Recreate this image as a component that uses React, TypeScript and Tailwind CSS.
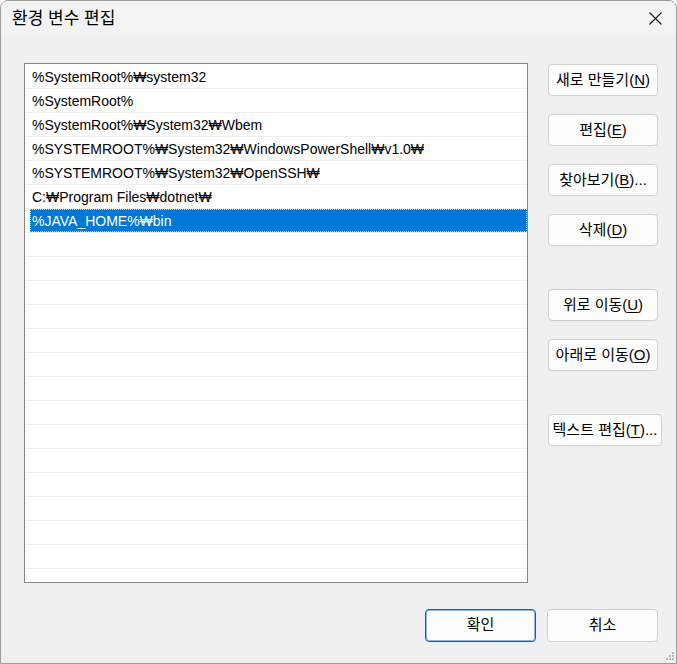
const paths = [
  "%SystemRoot%₩system32",
  "%SystemRoot%",
  "%SystemRoot%₩System32₩Wbem",
  "%SYSTEMROOT%₩System32₩WindowsPowerShell₩v1.0₩",
  "%SYSTEMROOT%₩System32₩OpenSSH₩",
  "C:₩Program Files₩dotnet₩",
  "%JAVA_HOME%₩bin",
];

const SELECTED = 6;
const ROW_COUNT = 22;

const FONT = {
  fontFamily: '"Liberation Sans", "Noto Sans CJK KR", sans-serif',
};

function Btn({
  label,
  hotkey,
  suffix = "",
  className = "",
}: {
  label: string;
  hotkey?: string;
  suffix?: string;
  className?: string;
}) {
  return (
    <button
      className={`h-[32px] shrink-0 flex items-center justify-center rounded-[4px] border border-[#d0d0d0] bg-[#fdfdfd] text-[15px] text-black whitespace-nowrap ${className}`}
    >
      {label}
      {hotkey && (
        <>
          (<span className="underline underline-offset-2">{hotkey}</span>)
        </>
      )}
      {suffix}
    </button>
  );
}

function PathList() {
  const rows = Array.from({ length: ROW_COUNT }, (_, i) => paths[i] ?? "");
  return (
    <div className="w-[504px] h-[520px] shrink-0 border border-[#858585] bg-white overflow-hidden pt-[1px] pl-[1px]">
      {rows.map((text, i) => (
        <div key={i} className="h-[24px] border-b border-[#efefef] pl-[4px]">
          <div
            className={
              i === SELECTED
                ? "h-full pl-[2px] flex items-center bg-[#0078d7] text-white outline outline-1 outline-dotted outline-[#e9c99b] -outline-offset-1"
                : "h-full pl-[2px] flex items-center text-black"
            }
          >
            <span className="text-[14px] leading-none whitespace-nowrap">{text}</span>
          </div>
        </div>
      ))}
    </div>
  );
}

export default function App() {
  return (
    <div
      style={FONT}
      className="relative w-[677px] h-[664px] flex flex-col bg-[#f0f0f0] border border-[#9c9c9c] rounded-t-[8px] overflow-hidden"
    >
      {/* Title bar */}
      <div className="h-[34px] shrink-0 bg-[#f3f3f3] flex items-center justify-between pl-[11px] pr-[14px]">
        <span className="text-[17px] text-black leading-none">환경 변수 편집</span>
        <svg width="13" height="13" viewBox="0 0 13 13" fill="none" stroke="#1a1a1a" strokeWidth="1.1">
          <path d="M0.5 0.5 L12.5 12.5 M12.5 0.5 L0.5 12.5" />
        </svg>
      </div>

      {/* Body */}
      <div className="flex-1 pt-[28px] pl-[23px] pr-[18px]">
        <div className="flex items-start">
          <PathList />
          <div className="ml-[20px] mt-[1px] w-[110px] shrink-0 flex flex-col gap-[18px]">
            <Btn label="새로 만들기" hotkey="N" className="w-[110px]" />
            <Btn label="편집" hotkey="E" className="w-[110px]" />
            <Btn label="찾아보기" hotkey="B" suffix="..." className="w-[110px]" />
            <Btn label="삭제" hotkey="D" className="w-[110px]" />
            <Btn label="위로 이동" hotkey="U" className="w-[110px] mt-[25px]" />
            <Btn label="아래로 이동" hotkey="O" className="w-[110px]" />
            <Btn label="텍스트 편집" hotkey="T" suffix="..." className="w-[114px] mt-[25px]" />
          </div>
        </div>

        <div className="flex justify-end gap-[11px] mt-[26px]">
          <button className="w-[111px] h-[33px] flex items-center justify-center rounded-[4px] border border-[#0067c0] shadow-[inset_0_0_0_1px_#8ab8e6] bg-[#fdfdfd] text-[15px] text-black">
            확인
          </button>
          <button className="w-[111px] h-[33px] flex items-center justify-center rounded-[4px] border border-[#d0d0d0] bg-[#fdfdfd] text-[15px] text-black">
            취소
          </button>
        </div>
      </div>

      {/* Resize grip */}
      <svg className="absolute right-[1px] bottom-[1px]" width="12" height="10" viewBox="0 0 12 10" fill="#b5b5b5">
        <rect x="9" y="0" width="2" height="2" />
        <rect x="6" y="3" width="2" height="2" />
        <rect x="9" y="3" width="2" height="2" />
        <rect x="3" y="6" width="2" height="2" />
        <rect x="6" y="6" width="2" height="2" />
        <rect x="9" y="6" width="2" height="2" />
      </svg>
    </div>
  );
}
